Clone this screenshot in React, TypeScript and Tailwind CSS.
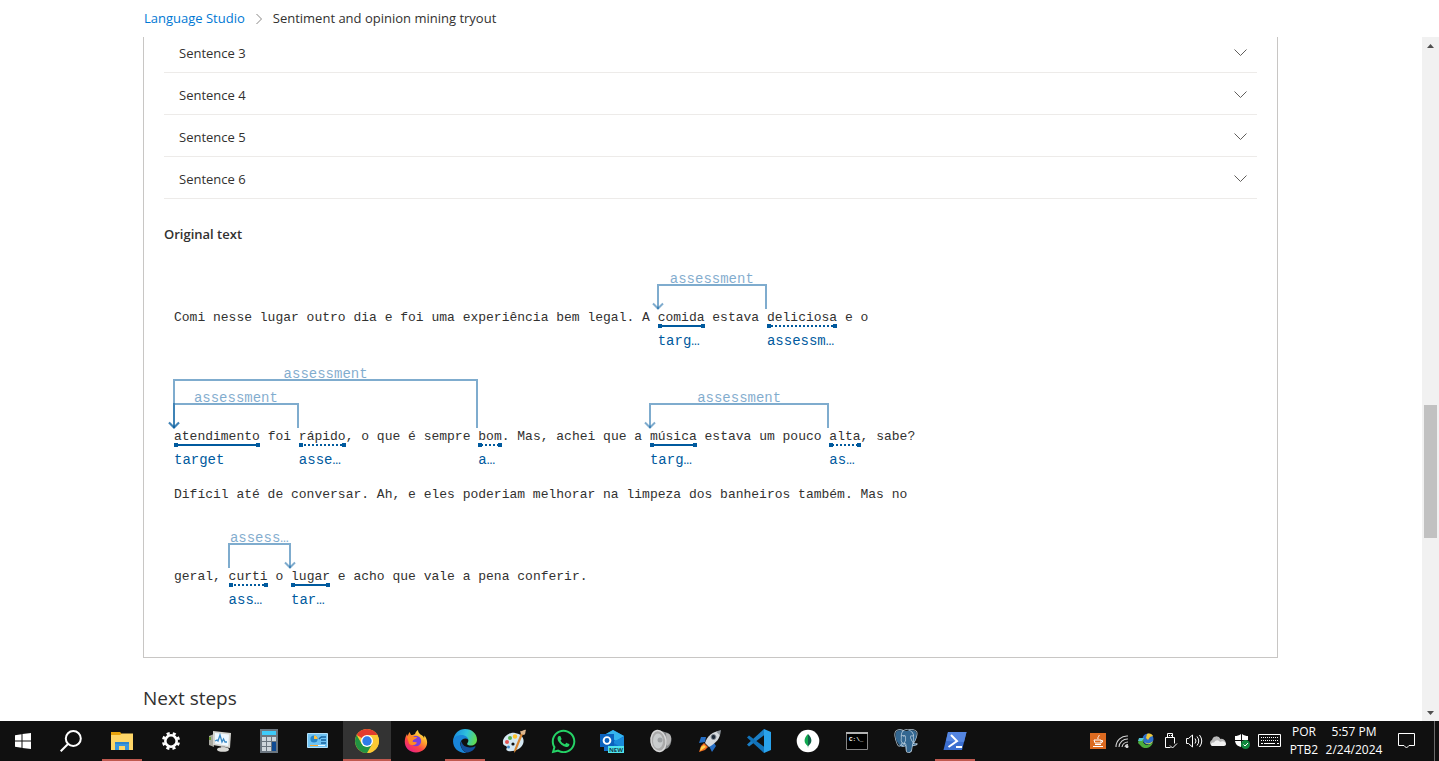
import type { ReactNode } from 'react';
import { FaWhatsapp } from 'react-icons/fa';
import { SiPostgresql } from 'react-icons/si';

type Arc = { chars: number; label: string; tall?: boolean; arrow: 'start' | 'end' };
type Token = { text: string; kind?: 'target' | 'assessment'; label?: string; arcs?: Arc[] };
type Line = { tokens: Token[]; spacing: string };

const lines: Line[] = [
  {
    spacing: 'pt-[46px] pb-[22px]',
    tokens: [
      { text: 'Comi nesse lugar outro dia e foi uma experiência bem legal. A ' },
      { text: 'comida', kind: 'target', label: 'targ…', arcs: [{ chars: 14, label: 'assessment', arrow: 'start' }] },
      { text: ' estava ' },
      { text: 'deliciosa', kind: 'assessment', label: 'assessm…' },
      { text: ' e o' },
    ],
  },
  {
    spacing: 'pt-[61px] pb-[22px]',
    tokens: [
      {
        text: 'atendimento',
        kind: 'target',
        label: 'target',
        arcs: [
          { chars: 39, label: 'assessment', tall: true, arrow: 'start' },
          { chars: 16, label: 'assessment', arrow: 'start' },
        ],
      },
      { text: ' foi ' },
      { text: 'rápido', kind: 'assessment', label: 'asse…' },
      { text: ', o que é sempre ' },
      { text: 'bom', kind: 'assessment', label: 'a…' },
      { text: '. Mas, achei que a ' },
      { text: 'música', kind: 'target', label: 'targ…', arcs: [{ chars: 23, label: 'assessment', arrow: 'start' }] },
      { text: ' estava um pouco ' },
      { text: 'alta', kind: 'assessment', label: 'as…' },
      { text: ', sabe?' },
    ],
  },
  {
    spacing: '',
    tokens: [
      {
        text: 'Difícil até de conversar. Ah, e eles poderiam melhorar na limpeza dos banheiros também. Mas no',
      },
    ],
  },
  {
    spacing: 'pt-[46px] pb-[22px]',
    tokens: [
      { text: 'geral, ' },
      { text: 'curti', kind: 'assessment', label: 'ass…', arcs: [{ chars: 8, label: 'assess…', arrow: 'end' }] },
      { text: ' o ' },
      { text: 'lugar', kind: 'target', label: 'tar…' },
      { text: ' e acho que vale a pena conferir.' },
    ],
  },
];

function Relation({ arc }: { arc: Arc }) {
  return (
    <span
      className={`absolute bottom-full -left-px border-2 border-b-0 border-[#005a9e]/50 ${arc.tall ? 'h-[49px]' : 'h-[25px]'}`}
      style={{ width: `calc(${arc.chars}ch + 1px)` }}
    >
      <span className="absolute inset-x-0 -top-4 text-center text-sm leading-[18px] text-[#005a9e]/50">
        {arc.label}
      </span>
      <svg
        className={`absolute -bottom-px h-2 w-3 ${arc.arrow === 'start' ? '-left-[7px]' : '-right-[7px]'}`}
        viewBox="0 0 12 8"
        fill="none"
        stroke="#005a9e"
        strokeOpacity=".5"
        strokeWidth="2"
      >
        <path d="M1 1.5 6 6.5 11 1.5" />
      </svg>
    </span>
  );
}

function Entity({ token }: { token: Token }) {
  return (
    <span className="relative inline-block">
      {token.text}
      {token.arcs?.map((arc) => <Relation key={arc.chars} arc={arc} />)}
      <span
        className={`absolute inset-x-0 top-4 border-t-2 border-[#005a9e] ${token.kind === 'target' ? 'border-solid' : 'border-dotted'}`}
      />
      <span className="absolute top-[15px] left-0 size-1 bg-[#005a9e]" />
      <span className="absolute top-[15px] right-0 size-1 bg-[#005a9e]" />
      <span className="absolute top-[23px] left-0 text-sm leading-[18px] text-[#005a9e]">{token.label}</span>
    </span>
  );
}

function Ico({ children, className = 'size-6' }: { children: ReactNode; className?: string }) {
  return (
    <svg viewBox="0 0 24 24" className={className} fill="none" aria-hidden="true">
      {children}
    </svg>
  );
}

const apps: { name: string; icon: ReactNode; open?: boolean; active?: boolean }[] = [
  {
    name: 'File Explorer',
    open: true,
    icon: (
      <Ico>
        <path d="M1 3h9l2 2h10v3H1z" fill="#e8a30c" />
        <path d="M1 6h9l2-1.5h11V21H1z" fill="#ffd667" />
        <path d="M5 21v-8h14v8h-4v-4H9v4z" fill="#3a96dd" />
        <path d="M5 13h14v2H5z" fill="#2d86cf" />
      </Ico>
    ),
  },
  {
    name: 'Settings',
    icon: (
      <Ico>
        <circle cx="12" cy="12" r="5.7" stroke="#fff" strokeWidth="2.6" />
        <circle cx="12" cy="12" r="7.8" stroke="#fff" strokeWidth="2.6" strokeDasharray="3.1 3.03" transform="rotate(11 12 12)" />
      </Ico>
    ),
  },
  {
    name: 'Performance Monitor',
    icon: (
      <Ico>
        <path d="M1 7l5-2v13l-5-2z" fill="#a9a9a0" />
        <path d="M1 8h2v3H1z" fill="#6e9b32" />
        <path d="M5 2l18 2-1 15L5 16z" fill="#d5d5d0" />
        <path d="M7 4l14 1.5-.8 11.5L7 14.500z" fill="#eef8ff" />
        <path d="M7 12l2-1 1 1 2-6 2 7 1.500-3 1.500 3h2" stroke="#3989c5" strokeWidth="1.300" />
        <path d="M13 17h4l1 3h-5z" fill="#aaa" />
        <ellipse cx="15" cy="20.500" rx="6" ry="2.300" fill="#d9d9d5" />
      </Ico>
    ),
  },
  {
    name: 'Calculator',
    icon: (
      <Ico>
        <path d="M3 0h18v24H3z" fill="#6b7680" />
        <path d="M5 2h14v4H5z" fill="#3ecbfa" />
        <path d="M5 8h4v4H5zm5 0h4v4h-4zm5 0h4v4h-4zM5 13h4v4H5zm5 0h4v4h-4zM5 18h4v4H5zm5 0h4v4h-4z" fill="#ced6dc" />
        <path d="M15 13h4v9h-4z" fill="#0f4a92" />
      </Ico>
    ),
  },
  {
    name: 'Control Panel',
    icon: (
      <Ico>
        <path d="M1.500 4.500h20v14h-20z" fill="#6fc3f3" stroke="#b4e2fb" />
        <circle cx="8" cy="10" r="3.600" fill="#2684c6" />
        <path d="M8 10V6.400A3.600 3.600 0 0 1 11.600 10z" fill="#ffbf3c" />
        <path d="M15 8h5M15 11h5M15 14h5M13 10l2-2" stroke="#17639e" strokeWidth="1.500" />
        <path d="M4 16.500h8" stroke="#ffa726" />
        <path d="M12 16.500h7" stroke="#e8f7ff" />
      </Ico>
    ),
  },
  {
    name: 'Google Chrome',
    open: true,
    active: true,
    icon: (
      <Ico>
        <circle cx="12" cy="12" r="12" fill="#fcc934" />
        <path d="M12 12 1.610 6A12 12 0 0 1 22.390 6z" fill="#e33b2e" />
        <path d="M12 6h10.390A12 12 0 0 1 12 24l5.200-9z" fill="#fcc934" />
        <path d="M1.610 6 6.800 15 12 18l5.200-3L12 24A12 12 0 0 1 1.610 6z" fill="#229342" />
        <circle cx="12" cy="12" r="6" fill="#fff" />
        <circle cx="12" cy="12" r="4.700" fill="#2f7be8" />
      </Ico>
    ),
  },
  {
    name: 'Firefox',
    icon: (
      <Ico>
        <defs>
          <linearGradient id="fox" x1="20" y1="2" x2="5" y2="23" gradientUnits="userSpaceOnUse">
            <stop stopColor="#fff35a" />
            <stop offset=".35" stopColor="#ffa62b" />
            <stop offset=".65" stopColor="#ff4545" />
            <stop offset="1" stopColor="#e51d8b" />
          </linearGradient>
        </defs>
        <path d="M14 1c0 2 1 3 2.500 4.500 2 1 3 1.500 3.500 3.500l.5-2.500C24 11 24 16 20.500 20 16 24.500 8 24.500 3.500 20 .5 17 .2 12 1.500 8L3 5l.5 2L5.500 3 7 6c2 0 2.500-.3 4-1 .5-2 1.500-3 3-4z" fill="url(#fox)" />
        <circle cx="12" cy="12" r="5.200" fill="#7a3fdd" />
        <path d="M3 8c3-2 6-1 7 0h3c0 2-4 2-4.500 4.500 1.500 1 3 .3 4.500 1-1 3-6 3.500-8 1z" fill="#ff8a24" />
      </Ico>
    ),
  },
  {
    name: 'Microsoft Edge',
    open: true,
    icon: (
      <Ico>
        <defs>
          <linearGradient id="edge" x1="2" y1="5" x2="23" y2="12" gradientUnits="userSpaceOnUse">
            <stop stopColor="#1c93df" />
            <stop offset=".5" stopColor="#2fc2dc" />
            <stop offset="1" stopColor="#62dc4c" />
          </linearGradient>
        </defs>
        <path d="M0 12C1 4 6 0 12 0c7 0 12 5 12 10.500 0 4-3 6-6 6-3.500 0-4.500-1.500-3.500-2.500C17 11 14 7.500 10 7.500 5 7.500 1 9 0 12z" fill="url(#edge)" />
        <path d="M0 12c.5-4 4.500-6 8.500-6 4 0 6.500 2.500 7 5-2-2.500-7-2-8 2.500-1 5 4 10.500 6.500 10.300C7 25 0 20 0 12z" fill="#1985d8" />
        <path d="M8.500 12C6 18 11 24 15 23.500c3-.5 6-2.500 7.500-5.500.3-.7-.3-1-1-.6C17 19.500 9.500 18.500 8.500 12z" fill="#124f9c" />
      </Ico>
    ),
  },
  {
    name: 'Paint',
    icon: (
      <Ico>
        <path d="M1 14C0 8 7 3 13 4c7 1 10 6 8 11s-9 8-15 7c-3-1-1-3-1-4-1-2-4-1-4-4z" fill="#d5e8f3" />
        <circle cx="5" cy="13" r="2" fill="#e35353" />
        <circle cx="8" cy="9" r="2" fill="#54b14e" />
        <circle cx="13" cy="7.500" r="2.200" fill="#ffc32c" />
        <circle cx="11" cy="15" r="1.600" fill="#111" />
        <circle cx="6.500" cy="18" r="1.500" fill="#438ac9" />
        <path d="M21 5 14.500 21 12 24l.5-4L19 4z" fill="#d78632" />
        <path d="M18 2c2 1 4-2 6-1-1 2 0 4-2 5l-3-1z" fill="#dfb78d" />
      </Ico>
    ),
  },
  { name: 'WhatsApp', icon: <FaWhatsapp className="size-[27px] text-[#25d366]" /> },
  {
    name: 'Outlook',
    icon: (
      <Ico>
        <path d="M4 6 13 1l11 6v15H4z" fill="#1170cb" />
        <path d="M6 5 13 1l11 6-8 5z" fill="#34b5ef" />
        <path d="M12 13 24 8v12z" fill="#198ada" />
        <path d="M0 5h14v13H0z" fill="#0b62bd" />
        <circle cx="7" cy="11.500" r="3.400" stroke="#fff" strokeWidth="1.900" />
        <path d="M8 17h16v7H8z" fill="#4ee5ee" />
        <text x="16" y="22.800" textAnchor="middle" fontSize="6" fontWeight="700" fontFamily="Open Sans, sans-serif" fill="#123d4b">NEW</text>
      </Ico>
    ),
  },
  {
    name: 'Sound',
    icon: (
      <Ico>
        <path d="m9 1 10 3c5 3 4 11 0 15L10 23z" fill="#85888a" />
        <path d="m17 4 3 1c4 3 2 10-2 12z" fill="#b5b5b5" />
        <ellipse cx="9.500" cy="12" rx="7.500" ry="10.500" fill="#aaa" stroke="#d8d8d8" strokeWidth="1.500" transform="rotate(-8 9.500 12)" />
        <ellipse cx="9" cy="12" rx="5" ry="7.500" fill="#c9cccd" />
        <circle cx="11" cy="11" r="2.500" fill="#9da0a2" />
      </Ico>
    ),
  },
  {
    name: 'Rocket',
    icon: (
      <Ico>
        <path d="m8 8-5 0-2 6 6-1zM11 17l5-3 2 3-4 6z" fill="#256ec5" />
        <path d="M7 14C9 7 15 2 22 2c1 7-4 12-11 16z" fill="#d6dade" />
        <path d="M18 2.500 23 1l-1 5.500z" fill="#8f969d" />
        <circle cx="15.500" cy="8" r="2.500" fill="#1d2938" stroke="#8f969d" />
        <path d="m6 14 4 4-3 3-6 2 2-6z" fill="#f36c20" />
        <path d="m6 16 2 2-3 2-3 2 1-4z" fill="#ffd34e" />
      </Ico>
    ),
  },
  {
    name: 'Visual Studio Code',
    icon: (
      <Ico>
        <path d="M17 0 0 15.500 2 17.500 18 5.500z" fill="#1b7fc7" />
        <path d="M17 24 0 8.500l2-2 16 12z" fill="#1273ba" />
        <path d="m17 0 7 3v18l-7 3z" fill="#29a2ec" />
      </Ico>
    ),
  },
  {
    name: 'MongoDB Compass',
    icon: (
      <Ico>
        <circle cx="12" cy="12" r="11.300" fill="#fff" />
        <path d="M12 5c-5 5-4 9-.3 12l.3 2z" fill="#10aa50" />
        <path d="M12 5c5 5 4 9 .3 12L12 19z" fill="#116149" />
      </Ico>
    ),
  },
  {
    name: 'Command Prompt',
    icon: (
      <Ico>
        <path d="M1.500 3.500h21v17h-21z" fill="#000" stroke="#868686" />
        <path d="M1 3h22v2H1z" fill="#b3b3b3" />
        <text x="4" y="12" fontSize="6" fontWeight="700" fontFamily="Liberation Mono, monospace" fill="#fff">C:\_</text>
      </Ico>
    ),
  },
  {
    name: 'pgAdmin',
    icon: (
      <span className="relative size-6">
        <Ico>
          <path d="M2 3C5 0 10 2 12 2s7-2 10 1c2 4-1 9-2 11l3 1-5 3-1 5h-4l-2-6-4 1C4 15 0 9 2 3z" fill="#336791" />
        </Ico>
        <SiPostgresql className="absolute inset-0 size-6 text-[#b9cddd]" />
      </span>
    ),
  },
  {
    name: 'PowerShell',
    open: true,
    icon: (
      <Ico>
        <path d="M5 3h18.500L19 21H.5z" fill="#3c6fd0" />
        <path d="M5 3h18.500L21 13 3 12z" fill="#5485e0" />
        <path d="m8 6 6 6-8.500 6M13 18h6" stroke="#fff" strokeWidth="2" />
      </Ico>
    ),
  },
];

const tray: { name: string; icon: ReactNode; width: string }[] = [
  {
    name: 'Java',
    width: 'w-6',
    icon: (
      <svg viewBox="0 0 16 16" className="size-4" fill="none">
        <path d="M0 0h16v16H0z" fill="#dc6a20" />
        <path d="M9 2c1 1-2 2-1 4M4 7h7v3H5zM11 7.500h1.500v1.500L11 10M5 11.500h6M3 13.500h10" stroke="#fff" />
      </svg>
    ),
  },
  {
    name: 'Wi-Fi',
    width: 'w-6',
    icon: (
      <svg viewBox="0 0 16 16" className="size-4" fill="none" stroke="#d5d5d5" strokeWidth="1.100">
        <path d="M2 14A11 11 0 0 1 14 3M5 14a8.500 8.500 0 0 1 9-8M8 14a6 6 0 0 1 6-5M11 14a3 3 0 0 1 3-2.500" />
        <circle cx="13" cy="13.500" r="1" fill="#fff" />
      </svg>
    ),
  },
  {
    name: 'Download Manager',
    width: 'w-6',
    icon: (
      <svg viewBox="0 0 16 16" className="size-4">
        <circle cx="10" cy="6" r="5.500" fill="#2e6fc9" />
        <path d="M9 1c3-1 5 0 6 2l-3 1-2 3-2-2z" fill="#f0c93b" />
        <path d="M1 6h5l-1 3c2 4 6 4 10 0-1 6-9 8-12 4L0 10z" fill="#4bac3b" />
        <path d="M1 5h5L4 8H0z" fill="#54c6d7" />
        <path d="M7 9c2 2 5 2 8-1-1 3-6 5-8 1z" fill="#f0e03b" />
      </svg>
    ),
  },
  {
    name: 'Safely Remove Hardware',
    width: 'w-6',
    icon: (
      <svg viewBox="0 0 16 16" className="size-4" fill="none" stroke="#fff">
        <path d="M5.500 4.500v-4h5v4M3.500 14.500v-10h9v6M3.500 14.500h5M7.500 2v1M9.500 2v1M8 12.500l2.500 2.500L15 10.500" />
      </svg>
    ),
  },
  {
    name: 'Volume',
    width: 'w-6',
    icon: (
      <svg viewBox="0 0 18 16" className="h-4 w-[18px]" fill="none" stroke="#fff">
        <path d="M1.500 5.500h2l4-3.500v12l-4-3.500h-2zM10 5.500q2 2.500 0 5M12 3.500q3.500 4.500 0 9M14.500 2q4.500 6 0 12" />
      </svg>
    ),
  },
  {
    name: 'OneDrive',
    width: 'w-6',
    icon: (
      <svg viewBox="0 0 16 16" className="size-4">
        <path d="M1 12a3 3 0 0 1 1-5 4.500 4.500 0 0 1 8.500-1A4 4 0 0 1 15 12z" fill="#b8b8b8" />
        <path d="M2 13c-2-1-1-4 2-3.500C6 6 9 7 10 9c3-2 6 0 6 2 0 1-1 2-2 2z" fill="#f1f1f1" />
      </svg>
    ),
  },
  {
    name: 'Windows Security',
    width: 'w-6',
    icon: (
      <svg viewBox="0 0 16 16" className="size-4" fill="none">
        <path d="M7 1C5 2.500 3 3 1 3v4h6zM8 1c2 1.500 4 2 6 2v4H8zM1 8h6v6C3 13 1.500 11 1 8zM8 8h6c0 3-2 5-6 6z" fill="#fff" />
        <circle cx="11.500" cy="11.500" r="4.500" fill="#10893e" />
        <path d="m9.500 11.500 1.500 1.500 3-3" stroke="#fff" />
      </svg>
    ),
  },
  {
    name: 'Touch keyboard',
    width: 'w-8',
    icon: (
      <svg viewBox="0 0 24 14" className="h-3.5 w-6" fill="none" stroke="#fff">
        <path d="M.5.5h22v12H.5z" />
        <path d="M3 3.500h18M3 6.500h18" strokeDasharray="1 1" />
        <path d="M3 9.500h2M6 9.500h11M19 9.500h2" />
      </svg>
    ),
  },
];

function Taskbar() {
  return (
    <footer className="flex h-10 shrink-0 items-stretch justify-between bg-[#101010] font-['Open_Sans',sans-serif] text-white">
      <nav className="flex gap-px" aria-label="Taskbar">
        <button aria-label="Start" className="flex w-[46px] items-center justify-center">
          <svg viewBox="0 0 16 16" className="size-4" fill="#fff">
            <path d="M0 2.200 6.500 1.300V7.500H0zM7.500 1.100 16 0v7.500H7.500zM0 8.500h6.500v6.200L0 13.800zM7.500 8.500H16V16l-8.500-1.100z" />
          </svg>
        </button>
        <button aria-label="Search" className="flex w-12 items-center justify-center">
          <svg viewBox="0 0 22 22" className="size-[22px]" fill="none" stroke="#fff" strokeWidth="2">
            <circle cx="13.300" cy="8.500" r="7.500" />
            <path d="M8 14 .7 21.300" />
          </svg>
        </button>
        <div className="ml-0.5 flex gap-px">
          {apps.map((app) => (
            <button
              key={app.name}
              aria-label={app.name}
              className={`relative flex w-12 items-center justify-center ${app.active ? 'bg-[#333333]' : ''}`}
            >
              {app.icon}
              {app.open && (
                <span className={`absolute bottom-0 h-0.5 bg-[#c0594f] ${app.active ? 'inset-x-0' : 'inset-x-1'}`} />
              )}
            </button>
          ))}
        </div>
      </nav>
      <div className="flex text-xs leading-[18px]">
        {tray.map((item) => (
          <button key={item.name} aria-label={item.name} className={`flex items-center justify-center ${item.width}`}>
            {item.icon}
          </button>
        ))}
        <button className="mr-1 flex w-9 flex-col items-center justify-center">
          <span>POR</span>
          <span>PTB2</span>
        </button>
        <button className="flex w-14 flex-col items-center justify-center whitespace-nowrap">
          <span>5:57 PM</span>
          <span>2/24/2024</span>
        </button>
        <button aria-label="Notifications" className="flex w-12 items-center justify-center">
          <svg viewBox="0 0 17 16" className="h-4 w-[17px]" fill="none" stroke="#fff">
            <path d="M.5.5h16v12H11L8.500 15 6 12.500H.5z" />
          </svg>
        </button>
        <button aria-label="Show desktop" className="ml-1 w-[5px] border-l border-[#6b6b6b]" />
      </div>
    </footer>
  );
}

export default function App() {
  return (
    <div className="flex h-screen flex-col overflow-hidden bg-white font-['Open_Sans',sans-serif] text-[#323130]">
      <header className="flex h-[37px] shrink-0 items-center gap-2 pl-36 text-[13px]">
        <a href="#studio" className="text-[#0078d4]">Language Studio</a>
        <svg viewBox="0 0 12 12" className="size-3" fill="none" stroke="#8a8886">
          <path d="m3.500 1 5 5-5 5" />
        </svg>
        <span>Sentiment and opinion mining tryout</span>
      </header>
      <div className="flex min-h-0 flex-1">
        <main className="min-w-0 flex-1 overflow-hidden pr-36 pl-[143px]">
          <section className="-mt-1.5 border border-t-0 border-[#c8c6c4] px-5 pb-[49px]">
            {[3, 4, 5, 6].map((n) => (
              <button
                key={n}
                className="flex h-[42px] w-full items-center justify-between border-b border-[#edebe9] pt-1 pr-2.5 pl-[15px] text-left text-[13px]"
              >
                Sentence {n}
                <svg viewBox="0 0 13 13" className="size-[13px]" fill="none" stroke="#605e5c">
                  <path d="m.5 2.500 6 6 6-6" />
                </svg>
              </button>
            ))}
            <h3 className="mt-[25px] text-[13px] leading-5 font-semibold">Original text</h3>
            <div className="mt-[19px] flex flex-col gap-[18px] pl-2.5 font-['Liberation_Mono',monospace] text-[13px] leading-[18px] whitespace-pre">
              {lines.map((line, i) => (
                <p key={i} className={line.spacing}>
                  {line.tokens.map((token, j) =>
                    token.kind ? <Entity key={j} token={token} /> : <span key={j}>{token.text}</span>,
                  )}
                </p>
              ))}
            </div>
          </section>
          <h2 className="mt-[26px] text-[19px] leading-7">Next steps</h2>
        </main>
        <div className="flex w-[17px] shrink-0 flex-col items-center bg-[#f1f1f1]">
          <button aria-label="Scroll up" className="flex h-[17px] w-full items-center justify-center">
            <svg viewBox="0 0 7 4" className="h-1 w-[7px]" fill="#505050"><path d="M0 4 3.500 0 7 4z" /></svg>
          </button>
          <div className="flex min-h-0 flex-1 flex-col items-center">
            <div className="grow-[351]" />
            <div className="w-[13px] grow-[133] bg-[#c1c1c1]" />
            <div className="grow-[166]" />
          </div>
          <button aria-label="Scroll down" className="flex h-[17px] w-full items-center justify-center">
            <svg viewBox="0 0 7 4" className="h-1 w-[7px]" fill="#505050"><path d="M0 0 3.500 4 7 0z" /></svg>
          </button>
        </div>
      </div>
      <Taskbar />
    </div>
  );
}
